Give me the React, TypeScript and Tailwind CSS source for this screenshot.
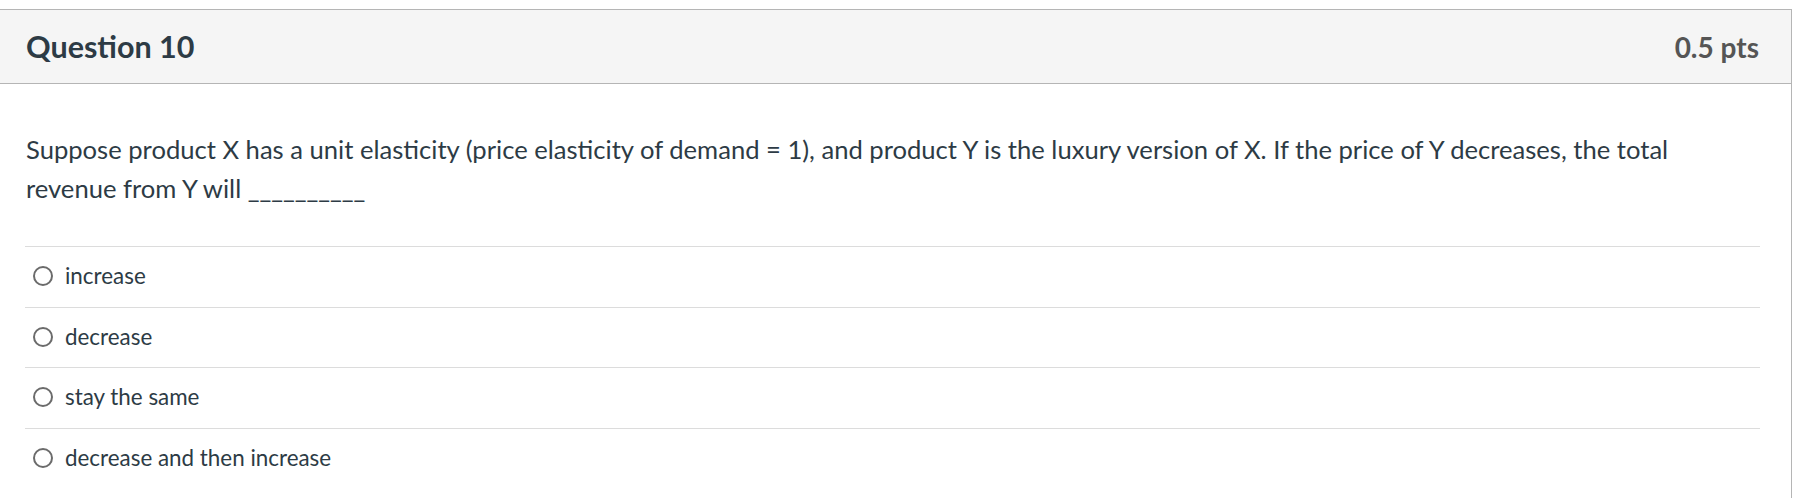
const answers = ["increase", "decrease", "stay the same", "decrease and then increase"]

function Radio() {
  return (
    <span className="inline-block w-[20px] h-[20px] rounded-full border-2 border-[#6b6b6b] bg-white shrink-0" />
  )
}

export default function App() {
  return (
    <div className="w-[1800px] h-[498px] bg-white pt-[9px] font-['Lato','Liberation_Sans',sans-serif] text-[#2d3b45]">
      <div className="w-[1792px] border-t border-r border-[#b5b5b5] h-[489px]">
        <div className="h-[74px] bg-[#f5f5f5] border-b border-[#b5b5b5] flex items-center justify-between pl-[26px] pr-[32px]">
          <h2 className="text-[30.5px] font-bold">Question 10</h2>
          <span className="text-[28px] font-bold text-[#555555]">0.5 pts</span>
        </div>
        <div className="pl-[25px] pr-[31px] pt-[46px]">
          <p className="text-[25.6px] leading-[39px] pl-px">
            Suppose product X has a unit elasticity (price elasticity of demand = 1), and product Y is the luxury
            version of X. If the price of Y decreases, the total revenue from Y will __________
          </p>
          <ul className="mt-[38px]">
            {answers.map((a) => (
              <li
                key={a}
                className="h-[60.7px] border-t border-[#dcdcdc] flex items-center gap-[12px] pl-[8px] pb-[2px]"
              >
                <Radio />
                <span className="text-[22.4px]">{a}</span>
              </li>
            ))}
          </ul>
        </div>
      </div>
    </div>
  )
}
